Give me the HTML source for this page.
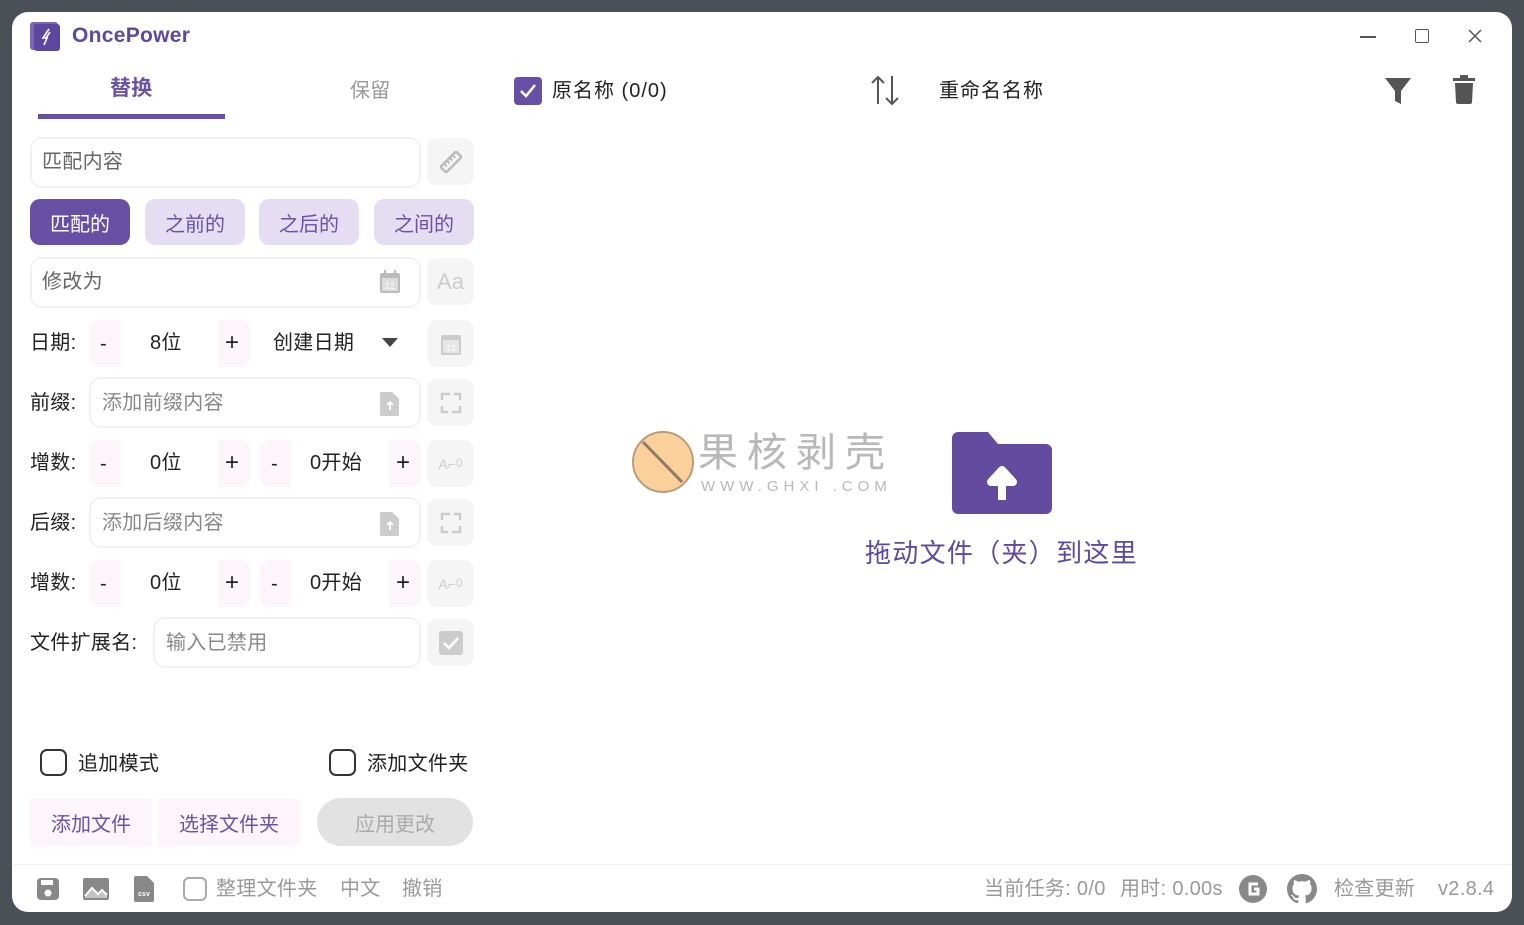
<!DOCTYPE html>
<html><head><meta charset="utf-8"><style>
*{margin:0;padding:0;box-sizing:border-box}
body{width:1524px;height:925px;background:#4a5055;position:relative;overflow:hidden;font-family:"Liberation Sans","Noto Sans CJK SC",sans-serif;color:#222}
.win{position:absolute;left:12px;top:12px;width:1500px;height:900px;background:#fff;border-radius:16px 16px 16px 16px}
.a{position:absolute}
.t{position:absolute;font-size:20px;line-height:24px;white-space:nowrap;letter-spacing:0.3px}
.field{position:absolute;background:#fff;border:2px solid #f3f1f5;border-radius:12px}
.sbtn{position:absolute;width:47px;height:47px;background:#f5f5f5;border-radius:10px;display:flex;align-items:center;justify-content:center}
.chip{position:absolute;top:187px;height:46px;width:100px;border-radius:10px;background:#e5def2;color:#6a51a6;font-size:20px;display:flex;align-items:center;justify-content:center}
.step{position:absolute;height:47px;width:161px;border-radius:10px;background:#fcf5fa}
.step .m{position:absolute;left:31px;top:0;width:98px;height:47px;background:#fff}
.gray{color:#999}
.cb{position:absolute;width:27px;height:27px;border:2px solid #333;border-radius:7px}
</style></head><body>
<div class="win">
<div class="a" style="left:18px;top:10px;width:28px;height:28px;background:#7a68b3;border-radius:3px"></div>
<div class="a" style="left:22px;top:12px;width:26px;height:27px;background:#5c46a0;border-radius:3px"></div>
<svg class="a" style="left:24px;top:14px" width="22" height="22" viewBox="0 0 22 22"><path d="M13 3 L7 12 L11 12 L8 19 M14 6 L10 12" stroke="#fff" stroke-width="1.6" fill="none"/></svg>
<div class="t" style="left:60px;top:12px;font-size:21px;font-weight:bold;color:#5b4a9e">OncePower</div>
<div class="a" style="left:1348px;top:24px;width:16px;height:1.5px;background:#555"></div>
<div class="a" style="left:1403px;top:17px;width:14px;height:14px;border:1.5px solid #555;border-radius:2px"></div>
<svg class="a" style="left:1456px;top:17px" width="14" height="14"><path d="M1 1L13 13M13 1L1 13" stroke="#555" stroke-width="1.5"/></svg>
<div class="t" style="left:98px;top:65px;font-weight:bold;color:#6a51a6;font-size:21px">替换</div>
<div class="a" style="left:26px;top:102px;width:187px;height:5px;background:#6750a4"></div>
<div class="t gray" style="left:338px;top:67px;color:#999">保留</div>
<div class="field" style="left:18px;top:125px;width:391px;height:51px"></div>
<div class="t" style="left:30px;top:138px;color:#666">匹配内容</div>
<div class="sbtn" style="left:415px;top:126px"><svg width="28" height="28" viewBox="0 0 28 28"><g transform="rotate(-45 14 14)"><rect x="3" y="10" width="22" height="8" rx="1.5" fill="none" stroke="#bbb" stroke-width="2.5"/><path d="M8 10v4M12 10v4M16 10v4M20 10v4" stroke="#bbb" stroke-width="2"/></g></svg></div>
<div class="chip" style="left:18px;background:#6750a4;color:#fff">匹配的</div>
<div class="chip" style="left:133px">之前的</div>
<div class="chip" style="left:247px">之后的</div>
<div class="chip" style="left:362px">之间的</div>
<div class="field" style="left:18px;top:245px;width:391px;height:51px"></div>
<div class="t" style="left:30px;top:258px;color:#666">修改为</div>
<svg class="a" style="left:367px;top:258px" width="22" height="24"><rect x="1" y="3" width="20" height="20" rx="2" fill="#bbb"/><rect x="3" y="8" width="16" height="13" fill="#ddd"/><text x="11" y="19" font-size="9" text-anchor="middle" fill="#fff" font-family="Liberation Sans">12</text><rect x="5" y="0" width="2" height="5" fill="#bbb"/><rect x="15" y="0" width="2" height="5" fill="#bbb"/></svg>
<div class="sbtn" style="left:415px;top:246px;color:#ccc;font-size:22px">Aa</div>
<div class="t" style="left:18px;top:319px">日期:</div>
<div class="step" style="left:77px;top:308px"><div class="m"></div></div>
<div class="t" style="left:88px;top:320px">-</div><div class="t" style="left:138px;top:319px">8位</div><div class="t" style="left:213px;top:319px;font-size:24px">+</div>
<div class="t" style="left:261px;top:319px">创建日期</div>
<svg class="a" style="left:370px;top:326px" width="16" height="10"><path d="M0 0H16L8 9Z" fill="#444"/></svg>
<div class="sbtn" style="left:415px;top:308px"><svg width="22" height="24"><rect x="1" y="3" width="20" height="20" rx="2" fill="#ccc"/><rect x="3" y="8" width="16" height="13" fill="#e6e6e6"/><text x="11" y="19" font-size="9" text-anchor="middle" fill="#fff" font-family="Liberation Sans">12</text></svg></div>
<div class="t" style="left:18px;top:379px">前缀:</div>
<div class="field" style="left:77px;top:365px;width:332px;height:51px"></div>
<div class="t" style="left:90px;top:379px;color:#888">添加前缀内容</div>
<svg class="a" style="left:368px;top:380px" width="20" height="24"><path d="M0 2a2 2 0 0 1 2-2h10l7 7v15a2 2 0 0 1-2 2H2a2 2 0 0 1-2-2Z" fill="#ccc"/><path d="M10 18V10M7 13l3-3 3 3" stroke="#fff" stroke-width="1.8" fill="none"/></svg>
<div class="sbtn" style="left:415px;top:367px"><svg width="30" height="30"><path d="M6 12V6h8M24 18v6h-8M24 12V6h-6M6 18v6h6" stroke="#ccc" stroke-width="2.5" fill="none"/></svg></div>
<div class="t" style="left:18px;top:439px">增数:</div>
<div class="step" style="left:77px;top:428px"><div class="m"></div></div>
<div class="t" style="left:88px;top:440px">-</div><div class="t" style="left:138px;top:439px">0位</div><div class="t" style="left:213px;top:439px;font-size:24px">+</div>
<div class="step" style="left:248px;top:428px"><div class="m"></div></div>
<div class="t" style="left:259px;top:440px">-</div><div class="t" style="left:298px;top:439px">0开始</div><div class="t" style="left:384px;top:439px;font-size:24px">+</div>
<div class="sbtn" style="left:415px;top:428px;color:#ccc;font-size:14px">A⌐<sub>0</sub></div>
<div class="t" style="left:18px;top:499px">后缀:</div>
<div class="field" style="left:77px;top:485px;width:332px;height:51px"></div>
<div class="t" style="left:90px;top:499px;color:#888">添加后缀内容</div>
<svg class="a" style="left:368px;top:500px" width="20" height="24"><path d="M0 2a2 2 0 0 1 2-2h10l7 7v15a2 2 0 0 1-2 2H2a2 2 0 0 1-2-2Z" fill="#ccc"/><path d="M10 18V10M7 13l3-3 3 3" stroke="#fff" stroke-width="1.8" fill="none"/></svg>
<div class="sbtn" style="left:415px;top:487px"><svg width="30" height="30"><path d="M6 12V6h8M24 18v6h-8M24 12V6h-6M6 18v6h6" stroke="#ccc" stroke-width="2.5" fill="none"/></svg></div>
<div class="t" style="left:18px;top:559px">增数:</div>
<div class="step" style="left:77px;top:548px"><div class="m"></div></div>
<div class="t" style="left:88px;top:560px">-</div><div class="t" style="left:138px;top:559px">0位</div><div class="t" style="left:213px;top:559px;font-size:24px">+</div>
<div class="step" style="left:248px;top:548px"><div class="m"></div></div>
<div class="t" style="left:259px;top:560px">-</div><div class="t" style="left:298px;top:559px">0开始</div><div class="t" style="left:384px;top:559px;font-size:24px">+</div>
<div class="sbtn" style="left:415px;top:548px;color:#ccc;font-size:14px">A⌐<sub>0</sub></div>
<div class="t" style="left:18px;top:619px">文件扩展名:</div>
<div class="field" style="left:141px;top:605px;width:268px;height:51px"></div>
<div class="t" style="left:154px;top:619px;color:#888">输入已禁用</div>
<div class="sbtn" style="left:415px;top:607px"><svg width="24" height="24"><rect width="24" height="24" rx="3" fill="#ccc"/><path d="M5 12l5 5 9-10" stroke="#fff" stroke-width="2.5" fill="none"/></svg></div>
<div class="cb" style="left:28px;top:737px"></div><div class="t" style="left:66px;top:740px">追加模式</div>
<div class="cb" style="left:317px;top:737px"></div><div class="t" style="left:355px;top:740px">添加文件夹</div>
<div class="a" style="left:18px;top:787px;width:122px;height:47px;background:#fcf6fc;color:#6a51a6;font-size:20px;display:flex;align-items:center;justify-content:center">添加文件</div>
<div class="a" style="left:146px;top:787px;width:142px;height:47px;background:#fcf6fc;color:#6a51a6;font-size:20px;display:flex;align-items:center;justify-content:center">选择文件夹</div>
<div class="a" style="left:305px;top:786px;width:156px;height:48px;background:#e2e2e2;border-radius:24px;color:#aaa;font-size:20px;display:flex;align-items:center;justify-content:center">应用更改</div>
<div class="a" style="left:0;top:852px;width:1500px;height:1px;background:#f0f0f0"></div>
<svg class="a" style="left:25px;top:866px" width="22" height="22"><rect width="22" height="22" rx="4" fill="#888"/><rect x="4" y="2" width="12" height="5" fill="#fff"/><circle cx="11" cy="15" r="3.5" fill="#fff"/></svg>
<svg class="a" style="left:71px;top:866px" width="26" height="22"><rect width="26" height="22" rx="2" fill="#888"/><path d="M2 18l7-8 6 6 4-4 5 5v3H2z" fill="#fff" opacity=".5"/><path d="M2 18l7-8 6 6 4-4 5 5" stroke="#fff" stroke-width="2" fill="none"/></svg>
<svg class="a" style="left:122px;top:864px" width="20" height="26"><path d="M0 2a2 2 0 0 1 2-2h11l7 7v17a2 2 0 0 1-2 2H2a2 2 0 0 1-2-2Z" fill="#888"/><text x="10" y="20" font-size="7" font-weight="bold" text-anchor="middle" fill="#fff" font-family="Liberation Sans">csv</text></svg>
<div class="a" style="left:171px;top:865px;width:24px;height:24px;border:2px solid #aaa;border-radius:6px"></div>
<div class="t" style="left:204px;top:865px;color:#999">整理文件夹</div>
<div class="t" style="left:328px;top:865px;color:#999">中文</div>
<div class="t" style="left:390px;top:865px;color:#999">撤销</div>
<div class="t" style="left:972px;top:865px;color:#999">当前任务: 0/0</div>
<div class="t" style="left:1108px;top:865px;color:#999">用时: 0.00s</div>
<svg class="a" style="left:1227px;top:863px" width="28" height="28"><circle cx="14" cy="14" r="14" fill="#888"/><path d="M19 9h-8v10h8v-5h-4" stroke="#fff" stroke-width="3" fill="none"/></svg>
<svg class="a" style="left:1275px;top:862px" width="30" height="30" viewBox="0 0 16 16"><path fill="#888" d="M8 0C3.58 0 0 3.58 0 8c0 3.540 2.29 6.530 5.470 7.590.4.07.55-.17.55-.38v-1.330c-2.230.48-2.700-1.070-2.700-1.070-.36-.92-.89-1.170-.89-1.170-.73-.5.05-.49.05-.49.81.06 1.230.83 1.230.83.72 1.230 1.880.87 2.340.67.07-.52.28-.87.51-1.070-1.780-.2-3.650-.89-3.650-3.950 0-.87.31-1.590.82-2.150-.08-.2-.36-1.020.08-2.120 0 0 .67-.21 2.200.82A7.600 7.600 0 0 1 8 3.860c.68 0 1.360.09 2 .27 1.530-1.040 2.200-.82 2.200-.82.44 1.100.16 1.920.08 2.120.51.56.82 1.270.82 2.150 0 3.070-1.870 3.750-3.650 3.950.29.25.54.73.54 1.480v2.200c0 .21.15.46.55.38A8.010 8.010 0 0 0 16 8c0-4.420-3.580-8-8-8z"/></svg>
<div class="t" style="left:1322px;top:865px;color:#999">检查更新</div>
<div class="t" style="left:1426px;top:865px;color:#999">v2.8.4</div>
<div class="a" style="left:502px;top:65px;width:28px;height:28px;background:#6750a4;border-radius:4px"></div>
<svg class="a" style="left:506px;top:69px" width="20" height="20"><path d="M3 10l5 5 9-11" stroke="#fff" stroke-width="2.5" fill="none"/></svg>
<div class="t" style="left:540px;top:67px;letter-spacing:1px">原名称 (0/0)</div>
<svg class="a" style="left:858px;top:62px" width="30" height="32"><path d="M8 30V3M2 9l6-6 6 6M22 2v28M16 24l6 6 6-6" stroke="#555" stroke-width="2" fill="none"/></svg>
<div class="t" style="left:927px;top:67px;letter-spacing:1px">重命名名称</div>
<svg class="a" style="left:1373px;top:66px" width="26" height="26"><path d="M0 0H26L16 13V26L10 23V13Z" fill="#555"/></svg>
<svg class="a" style="left:1441px;top:63px" width="22" height="29"><rect x="0" y="3" width="22" height="3" fill="#555"/><rect x="7" y="0" width="8" height="4" fill="#555"/><path d="M2 8h18l-1 19a2 2 0 0 1-2 2H5a2 2 0 0 1-2-2z" fill="#555"/></svg>
<svg class="a" style="left:618px;top:418px" width="68" height="66"><circle cx="33" cy="32" r="30" fill="#fbd09b" stroke="#bb9b78" stroke-width="2"/><path d="M13 12L52 52" stroke="#8c7a6a" stroke-width="3"/></svg>
<div class="t" style="left:686px;top:419px;font-size:40px;line-height:44px;color:#b8b8b8;letter-spacing:9px">果核剥壳</div>
<div class="t" style="left:689px;top:466px;font-size:15px;line-height:18px;color:#b8b8b8;letter-spacing:5px">WWW.GHXI .COM</div>
<svg class="a" style="left:940px;top:420px" width="100" height="82"><path d="M0 6a6 6 0 0 1 6-6h30l10 12h48a6 6 0 0 1 6 6v58a6 6 0 0 1-6 6H6a6 6 0 0 1-6-6Z" fill="#634ca0"/><path d="M50 68V48M39 50l11-12 11 12Z" stroke="#fff" stroke-width="8" fill="#fff" stroke-linejoin="round"/></svg>
<div class="t" style="left:853px;top:525px;font-size:26px;line-height:32px;color:#5b4a9e;letter-spacing:1.3px">拖动文件（夹）到这里</div>
</div>
</body></html>
